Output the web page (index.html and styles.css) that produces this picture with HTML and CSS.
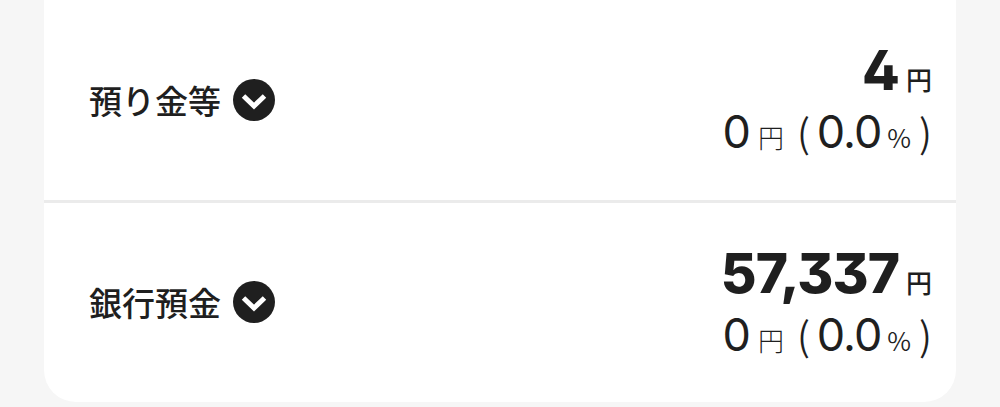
FILE: index.html
```html
<!DOCTYPE html>
<html lang="ja">
<head>
  <meta charset="UTF-8">
  <meta name="viewport" content="width=device-width, initial-scale=1.0">
  <title>保有資産</title>
  <link rel="stylesheet" href="styles.css">
</head>
<body>
  <div class="card">
    <div class="row">
      <div class="label">
        <span class="name">預り金等</span>
        <svg class="arrow" viewBox="0 0 42 42">
          <circle cx="21" cy="21" r="21"/>
          <path d="M10.5 17L21 27L31.5 17"/>
        </svg>
      </div>
      <div class="values">
        <div class="amount"><span class="num">4</span><span class="yen">円</span></div>
        <div class="change">
          <span class="diff">0</span><span class="unit">円</span><span class="paren open">(</span><span class="rate">0.0</span><span class="percent">%</span><span class="paren close">)</span>
        </div>
      </div>
    </div>
    <div class="row">
      <div class="label">
        <span class="name">銀行預金</span>
        <svg class="arrow" viewBox="0 0 42 42">
          <circle cx="21" cy="21" r="21"/>
          <path d="M10.5 17L21 27L31.5 17"/>
        </svg>
      </div>
      <div class="values">
        <div class="amount"><span class="num">57,337</span><span class="yen">円</span></div>
        <div class="change">
          <span class="diff">0</span><span class="unit">円</span><span class="paren open">(</span><span class="rate">0.0</span><span class="percent">%</span><span class="paren close">)</span>
        </div>
      </div>
    </div>
  </div>
</body>
</html>
```
FILE: styles.css
```css
* {
  box-sizing: border-box;
}

body {
  margin: 0;
  background-color: #f6f6f6;
  color: #1f1f1f;
  font-family: 'Noto Sans CJK JP', sans-serif;
  overflow: hidden;
}

/* Card */
.card {
  width: 912px;
  height: 402px;
  margin: 0 auto;
  background-color: #fff;
  border-radius: 0 0 32px 32px;
}

.row {
  height: 199px;
  padding: 0 24px 0 45px;
  display: flex;
  justify-content: space-between;
}

.row:first-child {
  height: 203px;
  border-bottom: 3px solid #ebebeb;
}

/* Left side */
.label {
  height: 198px;
  display: flex;
  align-items: center;
  gap: 12px;
}

.row:first-child .label {
  height: 199px;
}

.name {
  font-size: 33px;
  font-weight: 500;
}

.arrow {
  width: 42px;
  height: 42px;
  fill: #1f1f1f;
}

.arrow path {
  fill: none;
  stroke: #fff;
  stroke-width: 5;
}

/* Right side */
.values {
  padding-top: 40px;
}

.amount,
.change {
  display: flex;
  justify-content: flex-end;
  align-items: baseline;
  height: 60px;
  line-height: 60px;
}

.change {
  height: 62px;
  line-height: 62px;
}

.num {
  font-family: Inter, sans-serif;
  font-size: 55px;
  font-weight: 800;
  font-feature-settings: "cv02", "cv09";
  letter-spacing: -1px;
}

.yen {
  margin-left: 7px;
  font-size: 26px;
  font-weight: 500;
}

.diff,
.rate {
  font-family: Inter, sans-serif;
  font-size: 45px;
  font-weight: 400;
  letter-spacing: -1px;
}

.unit {
  margin-left: 8px;
  font-size: 26px;
  font-weight: 300;
}

.percent {
  margin-left: 6px;
  font-size: 26px;
  font-weight: 350;
}

.paren {
  font-size: 39px;
  font-weight: 350;
}

.open {
  margin: 0 7px 0 13px;
}

.close {
  margin-left: 8px;
}
```
